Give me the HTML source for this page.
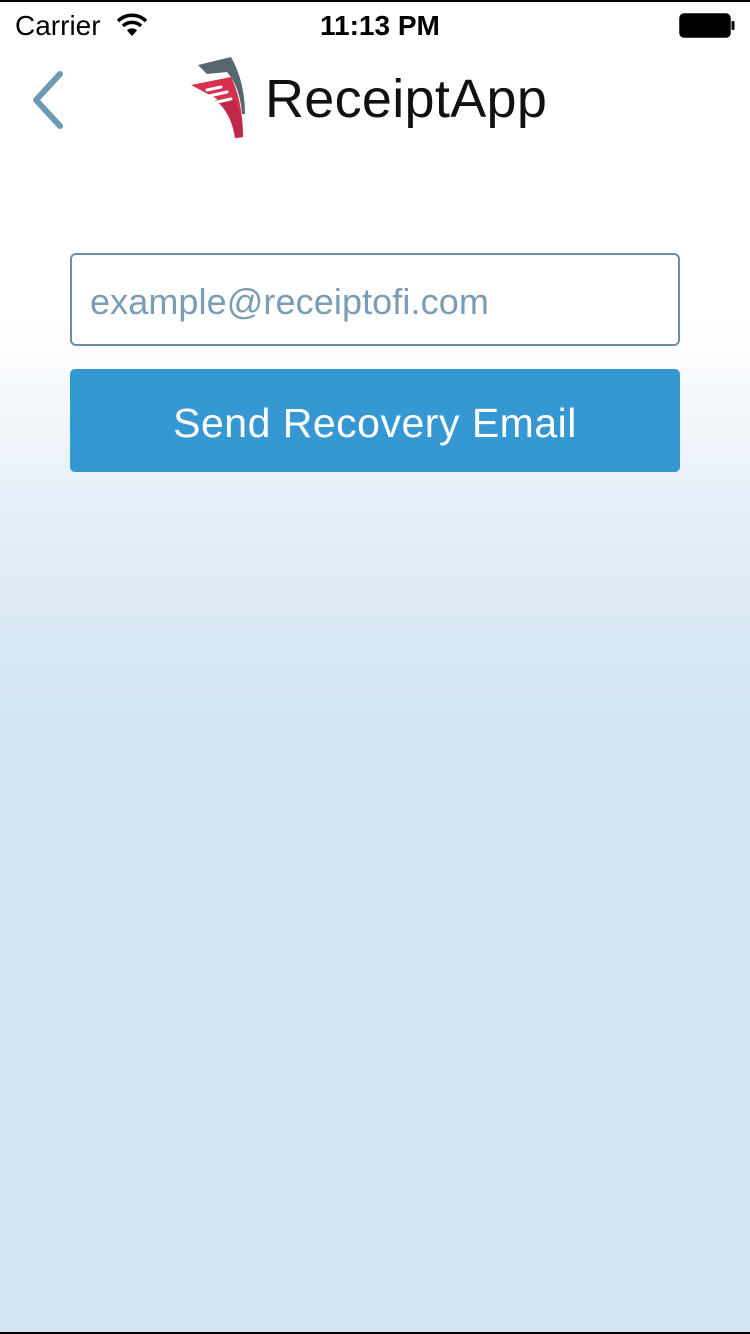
<!DOCTYPE html>
<html><head><meta charset="utf-8"><style>
html,body{margin:0;padding:0}
body{width:750px;height:1334px;position:relative;overflow:hidden;font-family:"Liberation Sans",sans-serif;
background:linear-gradient(to bottom,#fff 0px,#fff 320px,#e4eef7 520px,#d1e5f3 720px,#d1e5f3 1334px);}
.topline{position:absolute;left:0;top:0;width:750px;height:2px;background:#000}
.botline{position:absolute;left:0;bottom:0;width:750px;height:2px;background:#000}
.st{position:absolute;top:10px;font-size:28px;color:#000}
.input{position:absolute;left:70px;top:253px;width:606px;height:89px;border:2px solid #6a8fa8;border-radius:6px;background:#fff;box-sizing:content-box}
.input span{position:absolute;left:18px;top:26px;font-size:36px;color:#7a9db4;letter-spacing:0.1px}
.btn{position:absolute;left:70px;top:369px;width:610px;height:103px;background:#3698d2;border-radius:5px;color:#fff;font-size:41px;text-align:center;line-height:108px;letter-spacing:0.5px}
.title{position:absolute;left:265px;top:68px;font-size:54px;color:#111;letter-spacing:0.3px}
</style></head><body>
<div class="topline"></div>
<div class="st" style="left:15px">Carrier</div>
<svg style="position:absolute;left:116px;top:12px" width="32" height="26" viewBox="0 0 32 26">
<path d="M2 9 A20 20 0 0 1 30 9" stroke="#000" stroke-width="3.5" fill="none"/>
<path d="M7 14 A13 13 0 0 1 25 14" stroke="#000" stroke-width="3.5" fill="none"/>
<path d="M16 24 L11 18.5 A7 7 0 0 1 21 18.5 Z" fill="#000"/></svg>
<div class="st" style="left:320px;font-weight:bold;font-size:28px">11:13 PM</div>
<svg style="position:absolute;left:679px;top:13px" width="58" height="26" viewBox="0 0 58 26">
<rect x="1" y="1" width="50" height="23" rx="4" fill="#000" stroke="#000" stroke-width="1.5"/>
<rect x="52.5" y="8" width="3" height="9" rx="1" fill="#000"/></svg>
<svg style="position:absolute;left:28px;top:70px" width="40" height="60" viewBox="0 0 40 60">
<path d="M32 4 L8 30 L32 56" stroke="#6c9ab3" stroke-width="6" fill="none" stroke-linecap="round" stroke-linejoin="round"/></svg>
<svg style="position:absolute;left:185px;top:52px" width="70" height="90" viewBox="0 0 70 90">
<path d="M13 13 L46 5 Q60 30 60 62 L57 62 Q55 35 42 20 L22 22 Z" fill="#56676f"/>
<path d="M6 33 L46 25 Q58 50 58 85 L52 86 Q48 60 34 48 Z" fill="#d9304f"/>
<path d="M30 48 Q46 60 50 86 L58 85 Q57 60 48 45 Z" fill="#c0284a"/>
<path d="M22 38 L36 35 M24 44 L42 40 M32 50 L46 47" stroke="#fff" stroke-width="3" stroke-linecap="round"/>
</svg>
<div class="title">ReceiptApp</div>
<div class="input"><span>example@receiptofi.com</span></div>
<div class="btn">Send Recovery Email</div>
<div class="botline"></div>
</body></html>
